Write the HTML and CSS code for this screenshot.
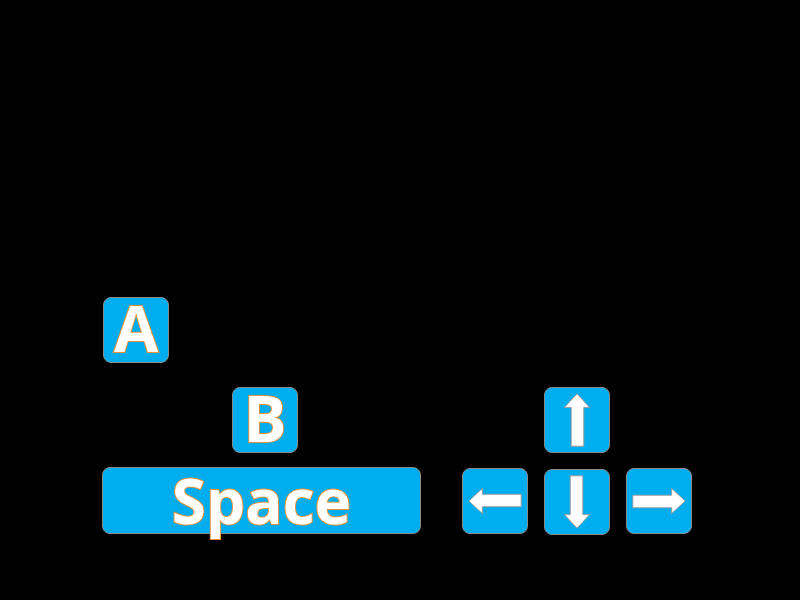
FILE: index.html
```html
<!DOCTYPE html>
<html lang="en">
  <head>
    <meta charset="UTF-8" />
    <meta name="viewport" content="width=device-width, initial-scale=1.0" />
    <title>Controls</title>
    <link rel="stylesheet" href="styles.css">
  </head>
  <body>
    <div class="pad">
      <!-- Touches d'action -->
      <div class="actions">
        <div class="key key-a"><span class="label">A</span></div>
        <div class="key key-b"><span class="label">B</span></div>
        <div class="key key-space"><span class="label">Space</span></div>
      </div>
      <!-- Flèches -->
      <div class="arrows">
        <div class="key arrow-up">
          <svg viewBox="0 0 66 66" width="66" height="66"><polygon class="arrow" points="33,6 46,20 40,20 40,60 27,60 27,20 20,20" /></svg>
        </div>
        <div class="key arrow-left">
          <svg viewBox="0 0 66 66" width="66" height="66"><polygon class="arrow" transform="rotate(-90 33 33)" points="33,6 46,20 40,20 40,60 27,60 27,20 20,20" /></svg>
        </div>
        <div class="key arrow-down">
          <svg viewBox="0 0 66 66" width="66" height="66"><polygon class="arrow" transform="rotate(180 33 33)" points="33,6 46,20 40,20 40,60 27,60 27,20 20,20" /></svg>
        </div>
        <div class="key arrow-right">
          <svg viewBox="0 0 66 66" width="66" height="66"><polygon class="arrow" transform="rotate(90 33 33)" points="33,6 46,20 40,20 40,60 27,60 27,20 20,20" /></svg>
        </div>
      </div>
    </div>
  </body>
</html>
```

FILE: styles.css
```css
/* Base */
html,
body {
  margin: 0;
  padding: 0;
  width: 100%;
  height: 100%;
  background-color: #000;
  font-family: "Open Sans", "DejaVu Sans", sans-serif;
}

/* Zone des contrôles */
.pad {
  display: flex;
  align-items: flex-end;
  gap: 41px;
  padding: 297px 0 0 102px;
}

.actions {
  display: flex;
  flex-direction: column;
  align-items: flex-start;
}

/* Touche de base */
.key {
  box-sizing: border-box;
  width: 66px;
  height: 66px;
  background-color: #00aeef;
  border: 1px solid #8a8a8a;
  border-radius: 8px;
  display: flex;
  align-items: center;
  justify-content: center;
  overflow: visible;
}

.key-a {
  margin-left: 1px;
  margin-bottom: 24px;
}

.key-b {
  margin-left: 130px;
  margin-bottom: 14px;
}

.key-space {
  width: 319px;
  height: 67px;
}

/* Lettres blanches avec contour orange */
.label {
  color: #fff;
  font-weight: bold;
  font-size: 64px;
  line-height: 1;
  -webkit-text-stroke: 2px #e8913a;
  paint-order: stroke fill;
  position: relative;
  top: -2px;
}

.key-space .label {
  font-size: 62px;
  top: -1px;
}

/* Flèches */
.arrows {
  display: grid;
  grid-template-columns: repeat(3, 66px);
  gap: 15px 16px;
  margin-bottom: -1px;
}

.arrow-up {
  grid-column: 2;
}

.arrow-left {
  grid-column: 1;
}

.arrow-down {
  margin-top: 1px;
}

.arrow {
  fill: #fff;
  stroke: #9a9a9a;
  stroke-width: 1;
}
```
